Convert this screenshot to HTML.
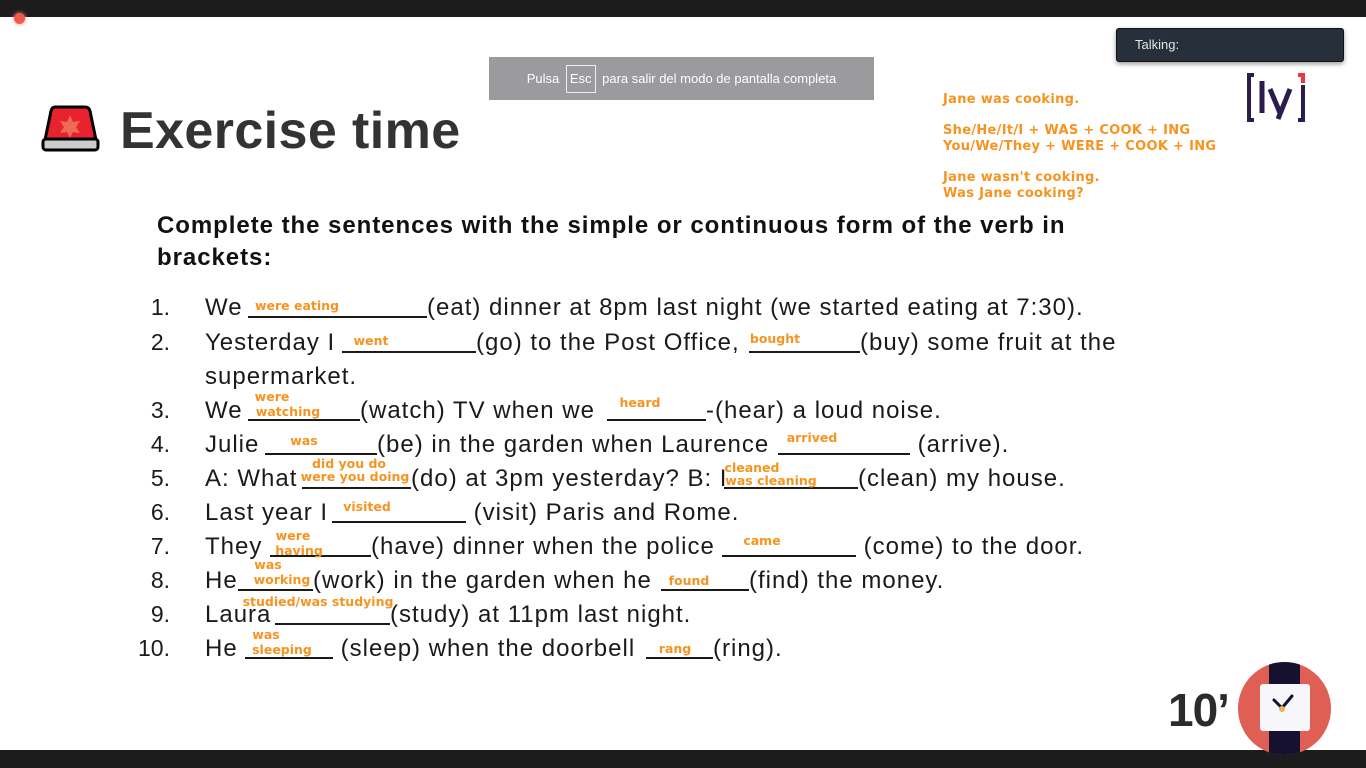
<!DOCTYPE html>
<html><head><meta charset="utf-8"><style>
*{margin:0;padding:0;box-sizing:border-box}
body{width:1366px;height:768px;position:relative;overflow:hidden;background:#fff;font-family:"Liberation Sans",sans-serif}
.a{position:absolute;white-space:nowrap}
.t{font-size:24px;color:#1a1a1a;line-height:26px;letter-spacing:1px;margin-top:1px}
.n{font-size:23px;color:#1a1a1a;line-height:26px;width:60px;text-align:right}
.b{position:absolute;height:1.5px;background:#1a1a1a}
.o{position:absolute;white-space:nowrap;font-family:"DejaVu Sans",sans-serif;font-weight:bold;font-size:12.5px;color:#f7931e;line-height:14px;transform:translate(-50%,-50%)}
.r{position:absolute;left:943px;font-family:"DejaVu Sans",sans-serif;font-weight:bold;font-size:13px;letter-spacing:0.3px;color:#f7931e;white-space:nowrap;line-height:14px}
</style></head><body>
<div class="a" style="left:0;top:0;width:1366px;height:17px;background:#1c1c1c"></div>
<div class="a" style="left:14px;top:13px;width:11px;height:11px;border-radius:50%;background:#f05a4a;box-shadow:0 0 4px #f88"></div>
<div class="a" style="left:0;top:750px;width:1366px;height:18px;background:#1c1c1c"></div>

<div class="a" style="left:489px;top:57px;width:385px;height:43px;background:#9b9b9e;color:#fff;font-size:13px;line-height:43px;text-align:center">Pulsa <span style="display:inline-block;border:1px solid #eee;padding:0 3px;line-height:26px;margin:0 3px">Esc</span> para salir del modo de pantalla completa</div>

<div class="a" style="left:1116px;top:28px;width:228px;height:34px;background:#262f3a;border:1px solid #111;border-radius:3px;color:#e6e6e6;font-size:13px;line-height:32px;padding-left:18px;box-shadow:0 2px 5px rgba(0,0,0,.4)">Talking:</div>

<svg class="a" style="left:1245px;top:73px" width="62" height="50" viewBox="0 0 62 50">
<path d="M9 2H4V47H9" fill="none" stroke="#2a1d4e" stroke-width="4"/>
<path d="M53 2H58V10" fill="none" stroke="#f0353c" stroke-width="4"/>
<path d="M58 12V47H53" fill="none" stroke="#2a1d4e" stroke-width="4"/>
<path d="M17 8V40" stroke="#2a1d4e" stroke-width="5"/>
<path d="M25 16L35 40M45 16L33 46" fill="none" stroke="#2a1d4e" stroke-width="5"/>
</svg>

<svg class="a" style="left:41px;top:104px" width="59" height="48" viewBox="0 0 59 48">
<path d="M14 3H44Q48 3 49 7L55 36H4L10 7Q11 3 14 3Z" fill="#e8222e" stroke="#000" stroke-width="3"/>
<rect x="2" y="35" width="55" height="11" rx="3" fill="#ccc" stroke="#000" stroke-width="3"/>
<path d="M29 11L32 18L39 17L35 23L39 29L32 28L29 34L26 28L19 29L23 23L19 17L26 18Z" fill="#ef6b55"/>
</svg>
<div class="a" style="left:120px;top:100px;font-size:52px;font-weight:bold;color:#333;line-height:62px;letter-spacing:0.4px">Exercise time</div>

<div class="r" style="top:93px">Jane was cooking.</div>
<div class="r" style="top:124px">She/He/It/I + WAS + COOK + ING</div>
<div class="r" style="top:140px">You/We/They + WERE + COOK + ING</div>
<div class="r" style="top:171px">Jane wasn't cooking.</div>
<div class="r" style="top:187px">Was Jane cooking?</div>

<div class="a" style="left:157px;top:210px;font-size:24px;font-weight:bold;color:#111;line-height:32px;width:945px;white-space:normal;letter-spacing:0.95px">Complete the sentences with the simple or continuous form of the verb in brackets:</div>

<div class="a n" style="left:110px;top:294px">1.</div>
<div class="a n" style="left:110px;top:329px">2.</div>
<div class="a n" style="left:110px;top:397px">3.</div>
<div class="a n" style="left:110px;top:431px">4.</div>
<div class="a n" style="left:110px;top:465px">5.</div>
<div class="a n" style="left:110px;top:499px">6.</div>
<div class="a n" style="left:110px;top:533px">7.</div>
<div class="a n" style="left:110px;top:567px">8.</div>
<div class="a n" style="left:110px;top:601px">9.</div>
<div class="a n" style="left:110px;top:635px">10.</div>

<div class="a t" style="left:205px;top:294px">We</div><div class="b" style="left:248px;width:179px;top:316px"></div>
<div class="a t" style="left:427px;top:294px">(eat) dinner at 8pm last night (we started eating at 7:30).</div>
<div class="a t" style="left:205px;top:329px">Yesterday I</div><div class="b" style="left:342px;width:134px;top:351px"></div>
<div class="a t" style="left:476px;top:329px">(go) to the Post Office,</div><div class="b" style="left:749px;width:111px;top:351px"></div>
<div class="a t" style="left:860px;top:329px">(buy) some fruit at the</div>
<div class="a t" style="left:205px;top:363px">supermarket.</div>
<div class="a t" style="left:205px;top:397px">We</div><div class="b" style="left:248px;width:112px;top:419px"></div>
<div class="a t" style="left:360px;top:397px">(watch) TV when we</div><div class="b" style="left:607px;width:99px;top:419px"></div>
<div class="a t" style="left:706px;top:397px">-(hear) a loud noise.</div>
<div class="a t" style="left:205px;top:431px">Julie</div><div class="b" style="left:265px;width:112px;top:453px"></div>
<div class="a t" style="left:377px;top:431px">(be) in the garden when Laurence</div><div class="b" style="left:778px;width:132px;top:453px"></div>
<div class="a t" style="left:910px;top:431px">&nbsp;(arrive).</div>
<div class="a t" style="left:205px;top:465px">A: What</div><div class="b" style="left:302px;width:109px;top:487px"></div>
<div class="a t" style="left:411px;top:465px">(do) at 3pm yesterday? B: I</div><div class="b" style="left:724px;width:134px;top:487px"></div>
<div class="a t" style="left:858px;top:465px">(clean) my house.</div>
<div class="a t" style="left:205px;top:499px">Last year I</div><div class="b" style="left:332px;width:134px;top:521px"></div>
<div class="a t" style="left:466px;top:499px">&nbsp;(visit) Paris and Rome.</div>
<div class="a t" style="left:205px;top:533px">They</div><div class="b" style="left:270px;width:101px;top:555px"></div>
<div class="a t" style="left:371px;top:533px">(have) dinner when the police</div><div class="b" style="left:722px;width:134px;top:555px"></div>
<div class="a t" style="left:856px;top:533px">&nbsp;(come) to the door.</div>
<div class="a t" style="left:205px;top:567px">He</div><div class="b" style="left:238px;width:75px;top:589px"></div>
<div class="a t" style="left:313px;top:567px">(work) in the garden when he</div><div class="b" style="left:661px;width:88px;top:589px"></div>
<div class="a t" style="left:749px;top:567px">(find) the money.</div>
<div class="a t" style="left:205px;top:601px">Laura</div><div class="b" style="left:275px;width:115px;top:623px"></div>
<div class="a t" style="left:390px;top:601px">(study) at 11pm last night.</div>
<div class="a t" style="left:205px;top:635px">He</div><div class="b" style="left:245px;width:88px;top:657px"></div>
<div class="a t" style="left:333px;top:635px">&nbsp;(sleep) when the doorbell</div><div class="b" style="left:646px;width:67px;top:657px"></div>
<div class="a t" style="left:713px;top:635px">(ring).</div>

<div class="o" style="left:297px;top:306px">were eating</div>
<div class="o" style="left:371px;top:341px">went</div>
<div class="o" style="left:775px;top:339px">bought</div>
<div class="o" style="left:272px;top:397px">were</div>
<div class="o" style="left:288px;top:412px">watching</div>
<div class="o" style="left:640px;top:403px">heard</div>
<div class="o" style="left:304px;top:441px">was</div>
<div class="o" style="left:812px;top:438px">arrived</div>
<div class="o" style="left:349px;top:464px">did you do</div>
<div class="o" style="left:355px;top:477px">were you doing</div>
<div class="o" style="left:752px;top:468px">cleaned</div>
<div class="o" style="left:771px;top:481px">was cleaning</div>
<div class="o" style="left:367px;top:507px">visited</div>
<div class="o" style="left:293px;top:536px">were</div>
<div class="o" style="left:299px;top:551px">having</div>
<div class="o" style="left:762px;top:541px">came</div>
<div class="o" style="left:268px;top:565px">was</div>
<div class="o" style="left:282px;top:580px">working</div>
<div class="o" style="left:689px;top:581px">found</div>
<div class="o" style="left:318px;top:602px">studied/was studying</div>
<div class="o" style="left:266px;top:635px">was</div>
<div class="o" style="left:282px;top:650px">sleeping</div>
<div class="o" style="left:675px;top:649px">rang</div>

<div class="a" style="left:1168px;top:682px;font-size:46px;font-weight:bold;color:#2b2b2b;line-height:56px;letter-spacing:-1px">10’</div>
<div class="a" style="left:1238px;top:662px;width:93px;height:93px;border-radius:50%;background:#df5f55;overflow:hidden">
 <div class="a" style="left:31px;top:0;width:31px;height:93px;background:#15112e"></div>
 <div class="a" style="left:26px;top:32px;width:5px;height:5px;background:#e9b64c"></div>
 <div class="a" style="left:62px;top:32px;width:5px;height:5px;background:#e9b64c"></div>
 <div class="a" style="left:22px;top:22px;width:50px;height:47px;background:#f7f6fa;border-radius:3px"></div>
 <svg class="a" style="left:22px;top:22px" width="50" height="47" viewBox="0 0 50 47"><path d="M14 16L22 24L32 12" fill="none" stroke="#15112e" stroke-width="3" stroke-linecap="round"/><circle cx="22" cy="25" r="3" fill="#e9b64c"/></svg>
</div>
</body></html>
